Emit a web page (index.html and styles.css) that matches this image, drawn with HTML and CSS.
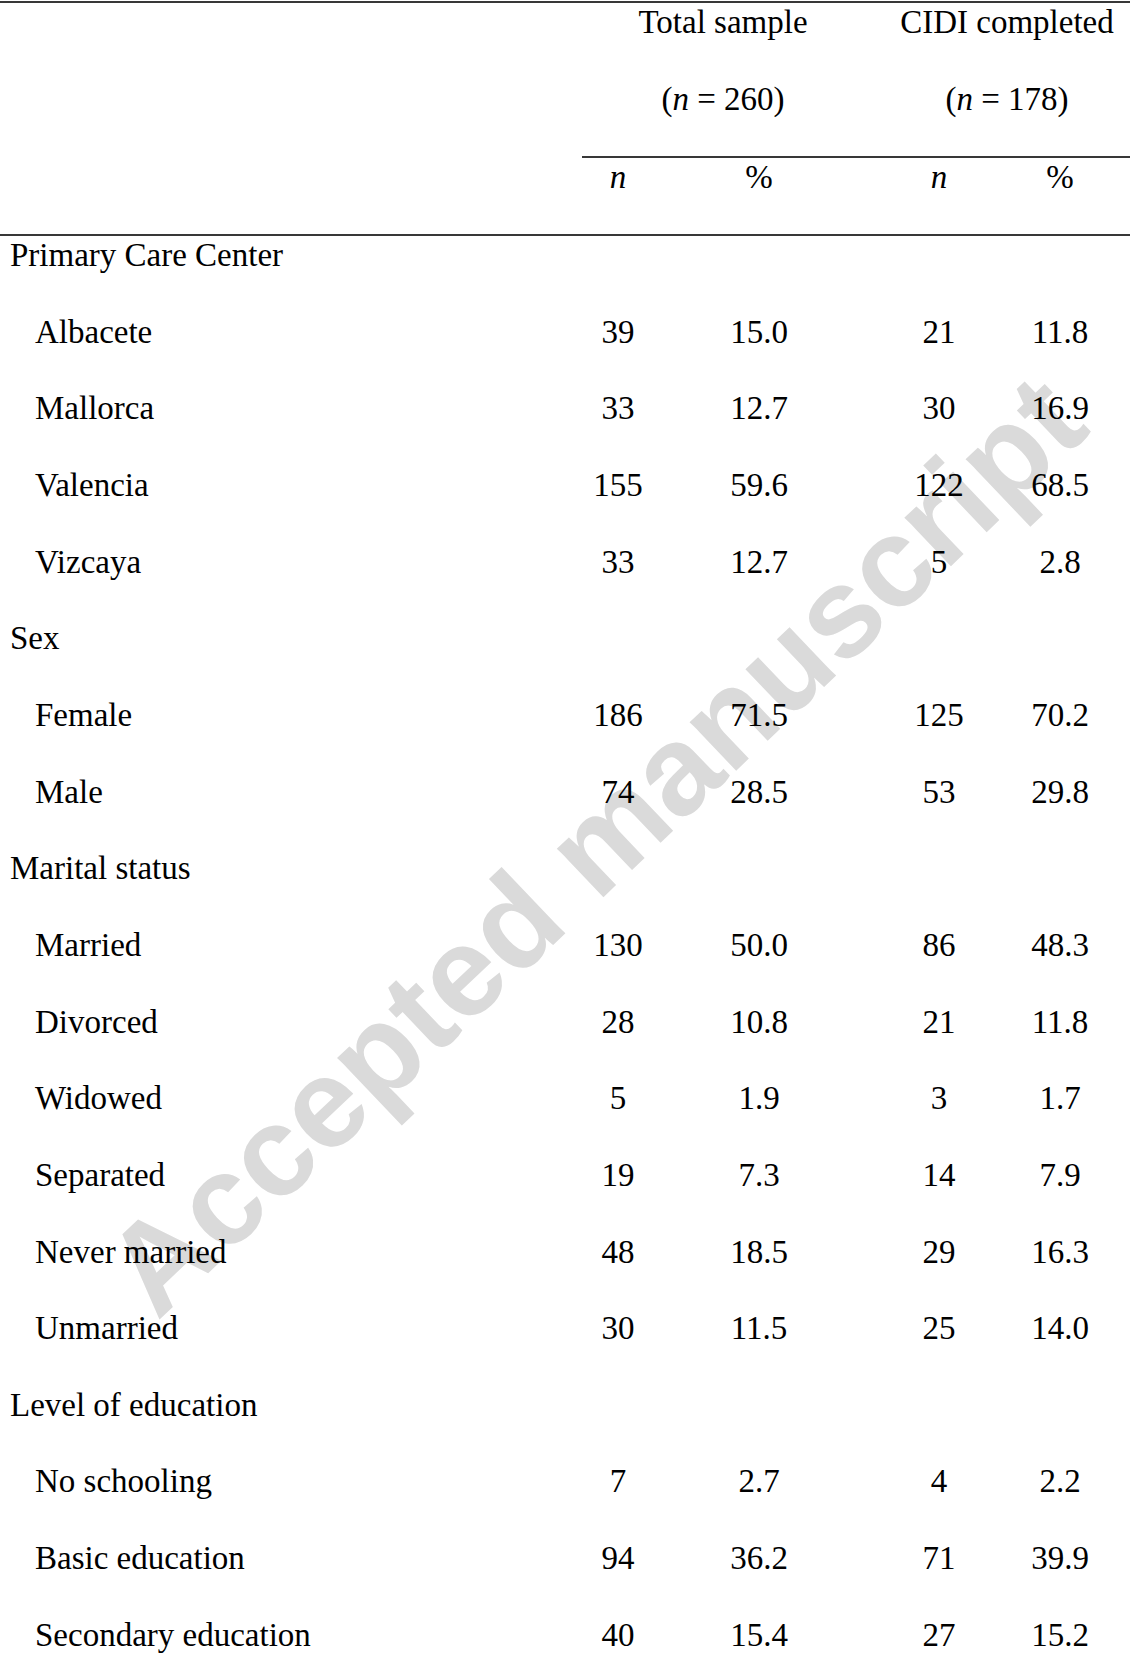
FILE: index.html
```html
<!DOCTYPE html>
<html lang="en">
<head>
<meta charset="utf-8">
<title>Sample characteristics</title>
<link rel="stylesheet" href="styles.css">
</head>
<body>
<div class="watermark" aria-hidden="true">Accepted manuscript</div>
<div class="sheet">
  <div class="head">
    <div class="hrow">
      <div class="blank"></div>
      <div class="group g1">Total sample</div>
      <div class="group g2">CIDI completed</div>
    </div>
    <div class="hrow second">
      <div class="blank"></div>
      <div class="subs">
        <div class="group g1">(<i>n</i> = 260)</div>
        <div class="group g2">(<i>n</i> = 178)</div>
      </div>
    </div>
    <div class="row colhead">
      <div class="label"></div>
      <div class="num c1"><i>n</i></div>
      <div class="num c2">%</div>
      <div class="num c3"><i>n</i></div>
      <div class="num c4">%</div>
    </div>
  </div>
  <div class="body">
    <div class="row"><div class="label cat">Primary Care Center</div></div>
    <div class="row"><div class="label item">Albacete</div><div class="num c1">39</div><div class="num c2">15.0</div><div class="num c3">21</div><div class="num c4">11.8</div></div>
    <div class="row"><div class="label item">Mallorca</div><div class="num c1">33</div><div class="num c2">12.7</div><div class="num c3">30</div><div class="num c4">16.9</div></div>
    <div class="row"><div class="label item">Valencia</div><div class="num c1">155</div><div class="num c2">59.6</div><div class="num c3">122</div><div class="num c4">68.5</div></div>
    <div class="row"><div class="label item">Vizcaya</div><div class="num c1">33</div><div class="num c2">12.7</div><div class="num c3">5</div><div class="num c4">2.8</div></div>
    <div class="row"><div class="label cat">Sex</div></div>
    <div class="row"><div class="label item">Female</div><div class="num c1">186</div><div class="num c2">71.5</div><div class="num c3">125</div><div class="num c4">70.2</div></div>
    <div class="row"><div class="label item">Male</div><div class="num c1">74</div><div class="num c2">28.5</div><div class="num c3">53</div><div class="num c4">29.8</div></div>
    <div class="row"><div class="label cat">Marital status</div></div>
    <div class="row"><div class="label item">Married</div><div class="num c1">130</div><div class="num c2">50.0</div><div class="num c3">86</div><div class="num c4">48.3</div></div>
    <div class="row"><div class="label item">Divorced</div><div class="num c1">28</div><div class="num c2">10.8</div><div class="num c3">21</div><div class="num c4">11.8</div></div>
    <div class="row"><div class="label item">Widowed</div><div class="num c1">5</div><div class="num c2">1.9</div><div class="num c3">3</div><div class="num c4">1.7</div></div>
    <div class="row"><div class="label item">Separated</div><div class="num c1">19</div><div class="num c2">7.3</div><div class="num c3">14</div><div class="num c4">7.9</div></div>
    <div class="row"><div class="label item">Never married</div><div class="num c1">48</div><div class="num c2">18.5</div><div class="num c3">29</div><div class="num c4">16.3</div></div>
    <div class="row"><div class="label item">Unmarried</div><div class="num c1">30</div><div class="num c2">11.5</div><div class="num c3">25</div><div class="num c4">14.0</div></div>
    <div class="row"><div class="label cat">Level of education</div></div>
    <div class="row"><div class="label item">No schooling</div><div class="num c1">7</div><div class="num c2">2.7</div><div class="num c3">4</div><div class="num c4">2.2</div></div>
    <div class="row"><div class="label item">Basic education</div><div class="num c1">94</div><div class="num c2">36.2</div><div class="num c3">71</div><div class="num c4">39.9</div></div>
    <div class="row"><div class="label item">Secondary education</div><div class="num c1">40</div><div class="num c2">15.4</div><div class="num c3">27</div><div class="num c4">15.2</div></div>
  </div>
</div>
</body>
</html>
```
FILE: styles.css
```css
html {
  overflow: hidden;
  background: #ffffff;
}
body {
  margin: 0;
  color: #000000;
  font-family: "Liberation Serif", "Times New Roman", serif;
  font-size: 33px;
  line-height: 38px;
}
i {
  font-style: italic;
}
.sheet {
  width: 1130px;
  padding-top: 1px;
}
.head {
  border-top: 2px solid #383838;
  border-bottom: 2px solid #383838;
}
.hrow {
  display: grid;
  grid-template-columns: 582px 282px 266px;
  height: 76.67px;
}
.hrow.second {
  height: 78px;
  grid-template-columns: 582px 548px;
}
.subs {
  display: grid;
  grid-template-columns: 282px 266px;
  border-bottom: 2px solid #383838;
}
.group {
  text-align: center;
  white-space: nowrap;
}
.group.g2 {
  padding-left: 20px;
}
.row {
  display: grid;
  grid-template-columns: 582px 72px 210px 150px 116px;
  height: 76.67px;
  box-sizing: border-box;
}
.row.colhead {
  height: 76.33px;
}
.label {
  white-space: nowrap;
}
.label.cat {
  padding-left: 10px;
}
.label.item {
  padding-left: 35px;
}
.num {
  text-align: center;
  white-space: nowrap;
}
.num.c4 {
  padding-right: 24px;
}
.watermark {
  position: absolute;
  left: 595px;
  top: 845px;
  z-index: -1;
  transform: translate(-50%, -50%) rotate(-43.6deg);
  font-family: "Liberation Sans", Arial, sans-serif;
  font-weight: bold;
  font-size: 127px;
  line-height: 1;
  color: #dadada;
  white-space: nowrap;
  pointer-events: none;
}
```
